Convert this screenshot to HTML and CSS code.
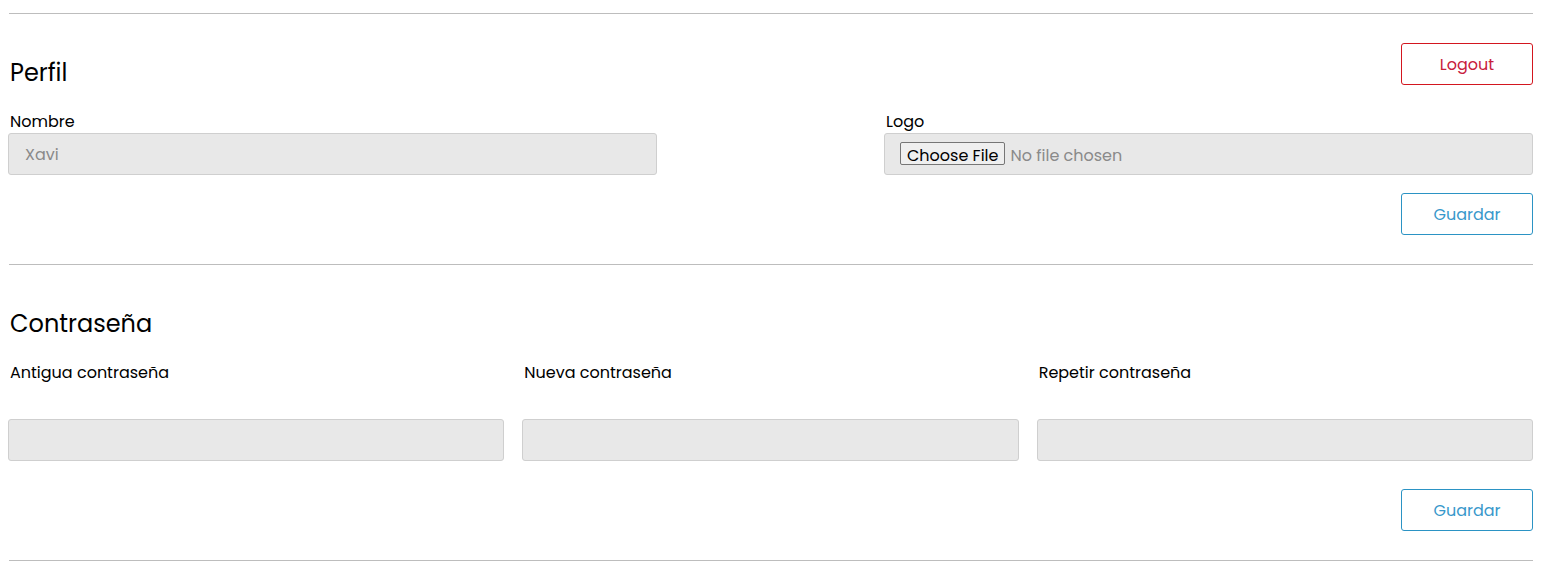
FILE: index.html
```html
<!DOCTYPE html>
<html lang="es">
<head>
<meta charset="utf-8">
<title>Perfil</title>
<link rel="stylesheet" href="styles.css">
</head>
<body>
<div class="page">
  <hr class="divider">
  <section class="section">
    <div class="section-head">
      <h2 class="section-title">Perfil</h2>
      <button class="btn btn-danger" type="button">Logout</button>
    </div>
    <div class="grid-two">
      <div class="field">
        <label class="field-label" for="nombre">Nombre</label>
        <input class="field-input" id="nombre" type="text" value="Xavi">
      </div>
      <div class="field">
        <label class="field-label" for="logo">Logo</label>
        <input class="field-input file-input" id="logo" type="file">
      </div>
    </div>
    <div class="actions">
      <button class="btn btn-primary" type="button">Guardar</button>
    </div>
  </section>
  <hr class="divider">
  <section class="section">
    <div class="section-head">
      <h2 class="section-title">Contraseña</h2>
    </div>
    <div class="grid-three">
      <div class="field">
        <label class="field-label spaced" for="old">Antigua contraseña</label>
        <input class="field-input" id="old" type="password">
      </div>
      <div class="field">
        <label class="field-label spaced" for="new">Nueva contraseña</label>
        <input class="field-input" id="new" type="password">
      </div>
      <div class="field">
        <label class="field-label spaced" for="rep">Repetir contraseña</label>
        <input class="field-input" id="rep" type="password">
      </div>
    </div>
    <div class="actions actions-wide">
      <button class="btn btn-primary" type="button">Guardar</button>
    </div>
  </section>
  <hr class="divider">
</div>
</body>
</html>
```

FILE: styles.css
```css
* { box-sizing: border-box; }

html, body {
  margin: 0;
  padding: 0;
  background: #ffffff;
}

body {
  font-family: "Poppins", "Open Sans", "DejaVu Sans", sans-serif;
  color: #111111;
  font-size: 16px;
}

.page {
  padding: 13px 17px 0 8px;
}

.divider {
  margin: 0 0 0 1px;
  border: 0;
  border-top: 1px solid #bdbdbd;
  height: 0;
}

.section {
  padding: 29px 0 29px 0;
}

.section-head {
  display: flex;
  justify-content: space-between;
  align-items: flex-start;
  margin-bottom: 21px;
}

.section-title {
  margin: 12px 0 0 2px;
  font-size: 24px;
  font-weight: 400;
  line-height: 36px;
  color: #000;
}

.grid-two {
  display: grid;
  grid-template-columns: 1fr 1fr;
  column-gap: 227px;
}

.grid-three {
  display: grid;
  grid-template-columns: 1fr 1fr 1fr;
  column-gap: 18px;
}

.field {
  display: flex;
  flex-direction: column;
}

.field-label {
  padding-left: 2px;
  line-height: 20px;
  margin-bottom: 1px;
  color: #000;
  font-size: 16px;
  font-weight: 400;
}

.field-label.spaced {
  margin-bottom: 36px;
}

.field-input {
  height: 42px;
  padding: 0 16px;
  border: 1px solid #cfcfcf;
  border-radius: 3px;
  background: #e8e8e8;
  font-family: inherit;
  font-size: 16px;
  color: #8a8a8a;
  outline: none;
}

.file-input {
  padding: 4px 15px 0 15px;
  line-height: 36px;
}

.file-input::file-selector-button {
  font-family: inherit;
  font-size: 16px;
  color: #000;
  background: #efefef;
  border: 1px solid #767676;
  border-radius: 2px;
  padding: 0 6px;
  height: 23px;
  margin-right: 5px;
}

.actions {
  display: flex;
  justify-content: flex-end;
  margin-top: 18px;
}

.actions-wide {
  margin-top: 28px;
}

.btn {
  width: 132px;
  height: 42px;
  background: #fff;
  border-radius: 3px;
  font-family: inherit;
  font-size: 16px;
  cursor: pointer;
}

.btn-danger {
  border: 1px solid #d3161f;
  color: #c8203c;
}

.btn-primary {
  border: 1px solid #2b93c4;
  color: #3898cb;
}
```
